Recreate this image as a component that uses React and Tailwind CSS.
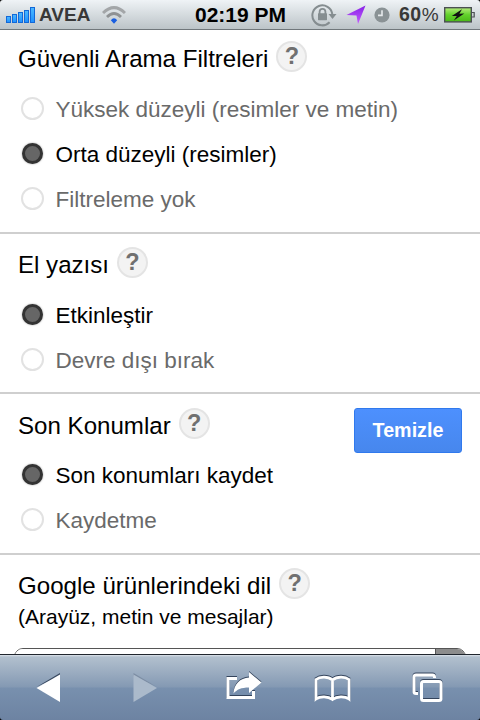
import React from 'react';

const SignalIcon = () => (
  <svg width="30" height="18" viewBox="0 0 30 18">
    <defs>
      <linearGradient id="signal" x1="0" y1="0" x2="0" y2="1">
        <stop offset="0" stopColor="#4cb9ff" />
        <stop offset="1" stopColor="#1e90ff" />
      </linearGradient>
    </defs>
    <g fill="url(#signal)" stroke="#1268d8" strokeWidth="1">
      <rect x="0.5" y="10.5" width="4" height="6" />
      <rect x="6.5" y="8.5" width="4" height="8" />
      <rect x="12.5" y="6.5" width="4" height="10" />
      <rect x="18.5" y="4.5" width="4" height="12" />
      <rect x="24.5" y="1.5" width="4" height="15" />
    </g>
  </svg>
);

const WifiIcon = () => (
  <svg width="24" height="18" viewBox="0 0 24 18" fill="none">
    <path d="M1 7 Q12 -3.8 23 7" stroke="#a3a6a8" strokeWidth="3" />
    <path d="M5 11 Q12 4 19 11" stroke="#8f9294" strokeWidth="2.8" />
    <path d="M8.8 14.2 Q12 10.4 15.2 14.2 L12 17.8 Z" fill="#1a5fe0" />
  </svg>
);

const LockIcon = () => (
  <svg width="26" height="24" viewBox="0 0 26 24" fill="none">
    <path d="M18.6 19.3 A10 10 0 1 1 21.3 11" stroke="#858d90" strokeWidth="2" />
    <path d="M17.5 11 H25.5 L21.5 16 Z" fill="#858d90" />
    <path d="M8.6 11 V8.8 A2.9 2.9 0 0 1 14.4 8.8 V11" stroke="#858d90" strokeWidth="1.8" />
    <rect x="7" y="10.2" width="9" height="7" rx="0.6" fill="#858d90" />
  </svg>
);

const LocationIcon = () => (
  <svg width="20" height="20" viewBox="0 0 20 20">
    <defs>
      <linearGradient id="location" x1="0" y1="0" x2="0" y2="1">
        <stop offset="0" stopColor="#8722e6" />
        <stop offset="1" stopColor="#c45cff" />
      </linearGradient>
    </defs>
    <path d="M19.5 0.5 L12 19 L10.5 10.5 L0.5 10 Z" fill="url(#location)" />
  </svg>
);

const ClockIcon = () => (
  <svg width="16" height="16" viewBox="0 0 16 16">
    <circle cx="8" cy="8" r="7.6" fill="#8a9295" />
    <path d="M8 3.2 V8.4 H4" stroke="#e5e9eb" strokeWidth="1.6" fill="none" />
  </svg>
);

const BatteryIcon = () => (
  <svg width="32" height="16" viewBox="0 0 32 16">
    <defs>
      <linearGradient id="battery" x1="0" y1="0" x2="0" y2="1">
        <stop offset="0" stopColor="#b5ec7d" />
        <stop offset="0.5" stopColor="#62d22b" />
        <stop offset="1" stopColor="#49b817" />
      </linearGradient>
    </defs>
    <rect x="0.7" y="0.7" width="26.6" height="14.2" fill="url(#battery)" stroke="#4b5053" strokeWidth="1.4" />
    <path d="M28 5.5 H30.2 V10 H28" fill="#cdd1d3" stroke="#4b5053" strokeWidth="1.2" />
    <path d="M18 2.2 L7.8 9 L12.8 8.9 L9.8 13.4 L20.3 6.6 L15.4 6.7 Z" fill="#111" />
  </svg>
);

const StatusBar = () => (
  <header className="flex h-[30px] shrink-0 items-center rounded-t-[3px] border-b border-[#70777b] bg-gradient-to-b from-[#eff3f6] to-[#bcc4c8] pl-1.5 text-[#383838]">
    <SignalIcon />
    <span className="ml-[3px] w-[52px] pt-px text-[19px] font-bold whitespace-nowrap">AVEA</span>
    <span className="ml-[11px]"><WifiIcon /></span>
    <span className="ml-[69px] w-[93px] pt-px text-[21px] font-bold whitespace-nowrap text-black">02:19 PM</span>
    <span className="ml-[23px]"><LockIcon /></span>
    <span className="ml-[9px]"><LocationIcon /></span>
    <span className="ml-[8px]"><ClockIcon /></span>
    <span className="ml-[9px] flex w-[41px] items-center pt-px text-[19.5px] whitespace-nowrap">
      <b className="tracking-[0.5px]">60</b>
      <span className="text-[19px]">%</span>
    </span>
    <span className="ml-[4px]"><BatteryIcon /></span>
  </header>
);

const Help = () => (
  <span className="flex h-[31px] w-[31px] items-center justify-center rounded-full border-2 border-[#e4e4e4] bg-[#f3f3f3] pt-px text-[23.5px] leading-none font-bold text-[#707070]">
    ?
  </span>
);

const Heading = ({ children }) => (
  <div className="flex items-center gap-2">
    <h2 className="text-[24.1px] leading-7 whitespace-nowrap">{children}</h2>
    <span className="-mt-[5px]"><Help /></span>
  </div>
);

const Option = ({ label, checked }) => (
  <div className="flex h-[45px] items-center pl-[3px]">
    {checked ? (
      <span className="m-px h-[21px] w-[21px] rounded-full border-[3px] border-[#333] bg-[#666] shadow-[0_0_2px_#999]" />
    ) : (
      <span className="h-[23px] w-[23px] rounded-full border-2 border-[#e2e2e2] bg-white" />
    )}
    <span className={checked ? 'ml-[11.5px] pt-0.5 text-[22.5px] text-black' : 'ml-[11.5px] pt-0.5 text-[22.5px] text-[#6a6a6a]'}>
      {label}
    </span>
  </div>
);

const BackIcon = () => (
  <svg width="24" height="30" viewBox="0 0 24 30">
    <path d="M0.5 14 L24 0 V3 Z" fill="#38485f" />
    <path d="M0.5 15 L24 1.5 V29 Z" fill="#fff" />
  </svg>
);

const ForwardIcon = () => (
  <svg width="24" height="30" viewBox="0 0 24 30">
    <path d="M0.5 0 L24 14 L0.5 3 Z" fill="#7c8da3" />
    <path d="M0.5 1.5 L24 15 L0.5 29 Z" fill="#abbacb" />
  </svg>
);

const ShareShape = () => (
  <>
    <path d="M11 7.5 H2 V26.5 H27.5 V20" fill="none" stroke="currentColor" strokeWidth="3" />
    <path d="M23 1 L35.5 11.5 L23 22 V16.5 C15 16.5 11 18.5 7.5 22.5 C8 13 14 7 23 6.5 Z" fill="currentColor" />
  </>
);

const BookShape = () => (
  <path
    d="M18.5 5 C14 1.2 6 1.2 2 4.5 V24 C6 21 14 21 18.5 24.5 C23 21 31 21 35 24 V4.5 C31 1.2 23 1.2 18.5 5 V24"
    fill="none"
    stroke="currentColor"
    strokeWidth="2.8"
  />
);

const PagesShape = () => (
  <g fill="none" stroke="currentColor" strokeWidth="3">
    <path d="M22.5 5 V4 Q22.5 2 20.5 2 H4 Q2 2 2 4 V18.5 Q2 20.5 4 20.5 H6" />
    <rect x="9.5" y="8.5" width="19.5" height="19" rx="2" />
  </g>
);

const ToolIcon = ({ width, shape: Shape }) => (
  <svg width={width} height="32" viewBox={`0 -1 ${width} 32`}>
    <g className="text-[#34445c]" transform="translate(0 -1)"><Shape /></g>
    <g className="text-white"><Shape /></g>
  </svg>
);

const Toolbar = () => (
  <footer className="flex h-[66px] shrink-0 items-start rounded-b-[3px] border-t border-[#20262e] bg-linear-[180deg,#dce3ea_0px,#b2c0ce_2px,#8499b3_32px,#7890ae_33px,#6d83a2_65px] pl-9">
    <span className="mt-[18px]"><BackIcon /></span>
    <span className="mt-[18px] ml-[73px]"><ForwardIcon /></span>
    <span className="mt-[15px] ml-[69px]"><ToolIcon width={36} shape={ShareShape} /></span>
    <span className="mt-[19px] ml-[52px]"><ToolIcon width={37} shape={BookShape} /></span>
    <span className="mt-[17px] ml-[61px]"><ToolIcon width={32} shape={PagesShape} /></span>
  </footer>
);

export default function App() {
  return (
    <div className="flex h-[720px] w-[480px] flex-col overflow-hidden bg-black font-['Liberation_Sans',Arial,sans-serif] text-black">
      <StatusBar />
      <main className="min-h-0 flex-1 overflow-hidden bg-white">
        <section className="h-[204px] border-b-2 border-[#cfcfcf] px-[18px] pt-[15px]">
          <div className="h-[41px]"><Heading>Güvenli Arama Filtreleri</Heading></div>
          <Option label="Yüksek düzeyli (resimler ve metin)" />
          <Option label="Orta düzeyli (resimler)" checked />
          <Option label="Filtreleme yok" />
        </section>
        <section className="h-[160px] border-b-2 border-[#cfcfcf] px-[18px] pt-[17px]">
          <div className="h-[41px]"><Heading>El yazısı</Heading></div>
          <Option label="Etkinleştir" checked />
          <Option label="Devre dışı bırak" />
        </section>
        <section className="h-[161px] border-b-2 border-[#cfcfcf] px-[18px] pt-[14px]">
          <div className="flex h-[44px] items-start justify-between">
            <div className="pt-1"><Heading>Son Konumlar</Heading></div>
            <button className="h-[45px] w-[108px] shrink-0 rounded-[3px] border border-[#3079ed] bg-gradient-to-b from-[#4d90fe] to-[#4787ed] text-[19.7px] font-bold text-white">
              Temizle
            </button>
          </div>
          <Option label="Son konumları kaydet" checked />
          <Option label="Kaydetme" />
        </section>
        <section className="px-[18px] pt-[17px]">
          <Heading>Google ürünlerindeki dil</Heading>
          <p className="mt-[3px] text-[21px] leading-7">(Arayüz, metin ve mesajlar)</p>
          <div className="-mx-1 mt-[17px] flex h-11 overflow-hidden rounded-[9px] border-[1.5px] border-[#555]">
            <div className="flex-1 bg-white" />
            <div className="w-[30px] border-l border-[#555] bg-[#8c8c8c]" />
          </div>
        </section>
      </main>
      <Toolbar />
    </div>
  );
}
